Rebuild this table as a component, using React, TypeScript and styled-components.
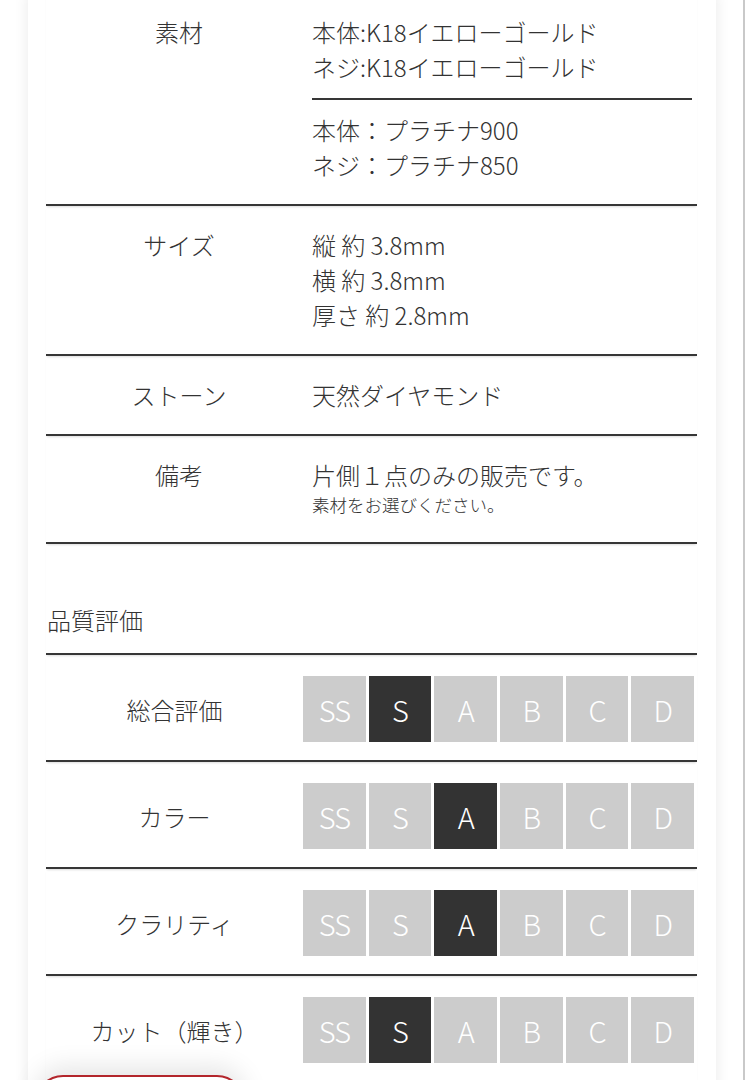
import React from "react";
import styled, { createGlobalStyle } from "styled-components";

const GlobalStyle = createGlobalStyle`
  html, body { margin: 0; padding: 0; background: #fff; }
  body {
    font-family: "Noto Sans CJK JP", "Noto Sans", sans-serif;
    color: #333;
    overflow: hidden;
  }
`;

const Page = styled.div`
  width: 745px;
  height: 1080px;
  overflow: hidden;
  position: relative;
`;

const Panel = styled.main`
  margin: -7px 29px 0 28px;
  padding: 0 19px 40px 18px;
  background: #fff;
  box-shadow: 0 0 14px rgba(0, 0, 0, 0.09);
`;

const ruled = `
  border-bottom: 2px solid #363636;
  box-shadow: 0 2px 2px -1px rgba(0, 0, 0, 0.14);
`;

const SpecRow = styled.div`
  display: grid;
  grid-template-columns: 266px 1fr;
  padding: 21px 0 22px;
  ${ruled}
`;

const Label = styled.div`
  text-align: center;
  font-size: 24px;
  line-height: 35px;
  font-weight: 300;
`;

const Value = styled.div`
  font-size: 24px;
  line-height: 35px;
  font-weight: 300;
`;

const Line = styled.div``;

const Note = styled.div`
  font-size: 17.5px;
  line-height: 26px;
  padding-bottom: 2px;
`;

const SubDivider = styled.hr`
  margin: 14px 5px 12px 0;
  border: 0;
  ${ruled}
`;

const Heading = styled.h2`
  margin: 0;
  padding: 58px 0 16px 1px;
  font-size: 24px;
  line-height: 35px;
  font-weight: 300;
  ${ruled}
`;

const RatingRow = styled.div`
  display: grid;
  grid-template-columns: 257px 391px;
  align-items: center;
  padding: 21px 0 18px;
  ${ruled}
`;

const Grades = styled.div`
  display: grid;
  grid-template-columns: repeat(6, 1fr);
  gap: 3px;
`;

const Grade = styled.div<{ $active: boolean }>`
  height: 66px;
  display: flex;
  align-items: center;
  justify-content: center;
  background: ${(p) => (p.$active ? "#333333" : "#cccccc")};
  color: #fff;
  font-size: 29px;
  font-weight: 300;
  letter-spacing: -1px;
`;

const FloatingButton = styled.button`
  position: fixed;
  left: 35px;
  top: 1075px;
  width: 210px;
  height: 56px;
  border: 2px solid #b3262c;
  border-radius: 28px;
  background: #fff;
  box-shadow: 0 -8px 26px rgba(0, 0, 0, 0.1);
`;

const ScrollBar = styled.div`
  position: fixed;
  top: 0;
  right: 0;
  width: 2px;
  height: 100%;
  background: #c9c9c9;
`;

const GRADES = ["SS", "S", "A", "B", "C", "D"];

const ratings = [
  { label: "総合評価", value: "S" },
  { label: "カラー", value: "A" },
  { label: "クラリティ", value: "A" },
  { label: "カット（輝き）", value: "S" },
];

export default function App() {
  return (
    <Page>
      <GlobalStyle />
      <Panel>
        <SpecRow>
          <Label>素材</Label>
          <Value>
            <Line>本体:K18イエローゴールド</Line>
            <Line>ネジ:K18イエローゴールド</Line>
            <SubDivider />
            <Line>本体：プラチナ900</Line>
            <Line>ネジ：プラチナ850</Line>
          </Value>
        </SpecRow>
        <SpecRow>
          <Label>サイズ</Label>
          <Value>
            <Line>縦 約 3.8mm</Line>
            <Line>横 約 3.8mm</Line>
            <Line>厚さ 約 2.8mm</Line>
          </Value>
        </SpecRow>
        <SpecRow>
          <Label>ストーン</Label>
          <Value>
            <Line>天然ダイヤモンド</Line>
          </Value>
        </SpecRow>
        <SpecRow>
          <Label>備考</Label>
          <Value>
            <Line>片側１点のみの販売です。</Line>
            <Note>素材をお選びください。</Note>
          </Value>
        </SpecRow>

        <Heading>品質評価</Heading>
        {ratings.map((r) => (
          <RatingRow key={r.label}>
            <Label>{r.label}</Label>
            <Grades>
              {GRADES.map((g) => (
                <Grade key={g} $active={g === r.value}>
                  {g}
                </Grade>
              ))}
            </Grades>
          </RatingRow>
        ))}
      </Panel>
      <FloatingButton aria-label="menu" />
      <ScrollBar />
    </Page>
  );
}
